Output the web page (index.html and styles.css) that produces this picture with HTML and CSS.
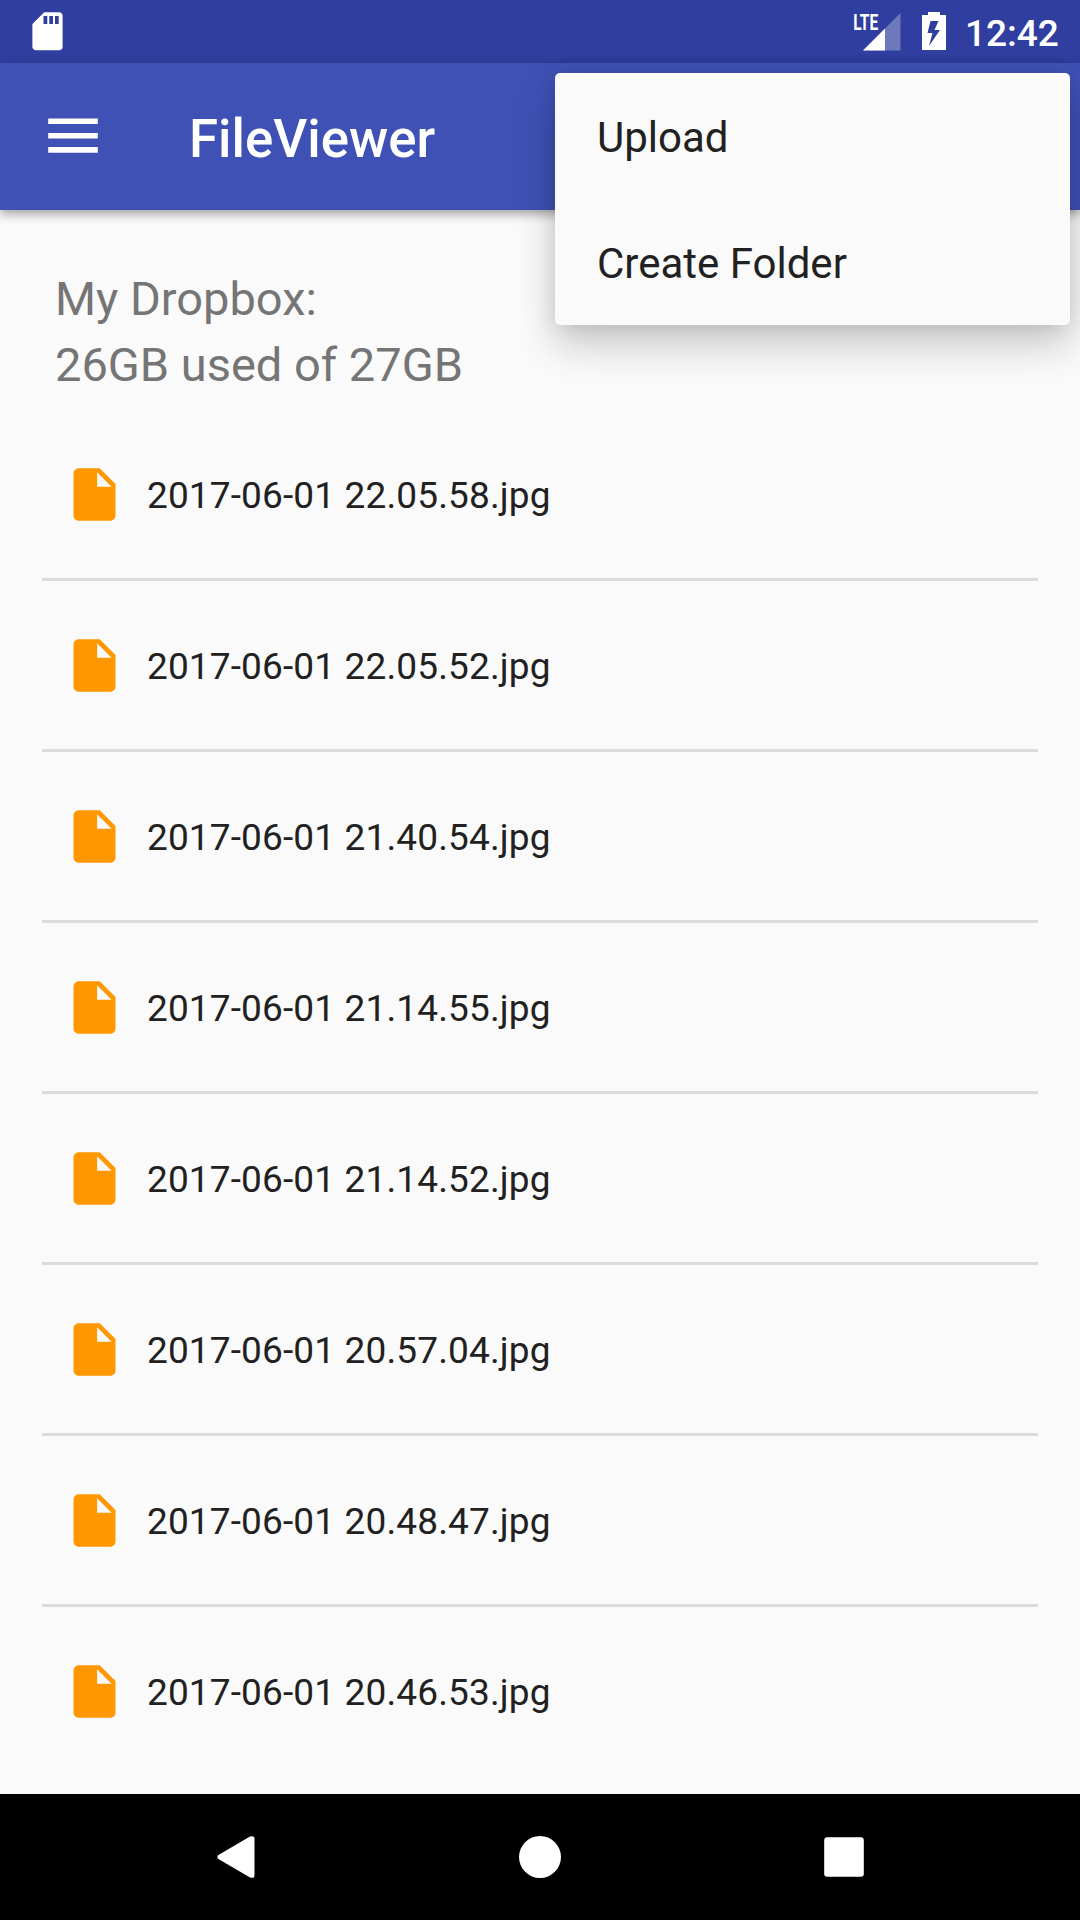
FILE: index.html
```html
<!DOCTYPE html>
<html lang="en">
<head>
<meta charset="utf-8">
<title>FileViewer</title>
<link rel="stylesheet" href="styles.css">
</head>
<body>
<div class="screen">
  <header class="status-bar">
    <svg class="sd-icon" width="31" height="39" viewBox="0 0 31 39"><path fill="#fff" fill-rule="evenodd" d="M12.200 0.300H27A3.500 3.500 0 0 1 30.600 3.900V34.700A3.500 3.500 0 0 1 27 38.300H4A3.500 3.500 0 0 1 .400 34.700V12ZM11.500 4V12H15.300V4ZM17.300 4V12H21V4ZM23 4V12H26.700V4Z"/></svg>
    <div class="status-right">
      <svg class="signal-icon" width="47" height="39" viewBox="0 0 47 39">
        <path fill="#fff" fill-opacity=".3" d="M46.500 1V38.500H9Z"/>
        <path fill="#fff" d="M31 16.500V38.500H9Z"/>
        <text class="network" x="-0.800" y="17.700" textLength="25" lengthAdjust="spacingAndGlyphs">LTE</text>
      </svg>
      <svg class="battery-icon" width="24" height="38" viewBox="0 0 24 38"><path fill="#fff" fill-rule="evenodd" d="M6 0H18V3H24V38H0V3H6ZM8.500 9L5.500 21H10.500L7 34L18 18H12.500L16.500 9Z"/></svg>
      <span class="clock">12:42</span>
    </div>
  </header>
  <div class="app-bar">
    <svg class="menu-icon" width="50" height="36" viewBox="0 0 50 36"><path fill="#fff" d="M.200.400H49.800V6.100H.200ZM.200 14.900H49.800V20.600H.200ZM.200 29.100H49.800V34.800H.200Z"/></svg>
    <h1 class="title">FileViewer</h1>
  </div>
  <main class="content">
    <p class="usage">My Dropbox:<br>26GB used of 27GB</p>
    <ul class="files">
      <li class="file"><svg class="file-icon" viewBox="0 0 24 24"><path d="M6 2c-1.100 0-1.990.900-1.990 2L4 20c0 1.100.890 2 1.990 2H18c1.100 0 2-.900 2-2V8l-6-6H6zm7 7V3.500L18.500 9H13z"/></svg><span>2017-06-01 22.05.58.jpg</span></li>
      <li class="file"><svg class="file-icon" viewBox="0 0 24 24"><path d="M6 2c-1.100 0-1.990.900-1.990 2L4 20c0 1.100.890 2 1.990 2H18c1.100 0 2-.900 2-2V8l-6-6H6zm7 7V3.500L18.500 9H13z"/></svg><span>2017-06-01 22.05.52.jpg</span></li>
      <li class="file"><svg class="file-icon" viewBox="0 0 24 24"><path d="M6 2c-1.100 0-1.990.900-1.990 2L4 20c0 1.100.890 2 1.990 2H18c1.100 0 2-.900 2-2V8l-6-6H6zm7 7V3.500L18.500 9H13z"/></svg><span>2017-06-01 21.40.54.jpg</span></li>
      <li class="file"><svg class="file-icon" viewBox="0 0 24 24"><path d="M6 2c-1.100 0-1.990.900-1.990 2L4 20c0 1.100.890 2 1.990 2H18c1.100 0 2-.900 2-2V8l-6-6H6zm7 7V3.500L18.500 9H13z"/></svg><span>2017-06-01 21.14.55.jpg</span></li>
      <li class="file"><svg class="file-icon" viewBox="0 0 24 24"><path d="M6 2c-1.100 0-1.990.900-1.990 2L4 20c0 1.100.890 2 1.990 2H18c1.100 0 2-.900 2-2V8l-6-6H6zm7 7V3.500L18.500 9H13z"/></svg><span>2017-06-01 21.14.52.jpg</span></li>
      <li class="file"><svg class="file-icon" viewBox="0 0 24 24"><path d="M6 2c-1.100 0-1.990.900-1.990 2L4 20c0 1.100.890 2 1.990 2H18c1.100 0 2-.900 2-2V8l-6-6H6zm7 7V3.500L18.500 9H13z"/></svg><span>2017-06-01 20.57.04.jpg</span></li>
      <li class="file"><svg class="file-icon" viewBox="0 0 24 24"><path d="M6 2c-1.100 0-1.990.900-1.990 2L4 20c0 1.100.890 2 1.990 2H18c1.100 0 2-.900 2-2V8l-6-6H6zm7 7V3.500L18.500 9H13z"/></svg><span>2017-06-01 20.48.47.jpg</span></li>
      <li class="file"><svg class="file-icon" viewBox="0 0 24 24"><path d="M6 2c-1.100 0-1.990.900-1.990 2L4 20c0 1.100.890 2 1.990 2H18c1.100 0 2-.900 2-2V8l-6-6H6zm7 7V3.500L18.500 9H13z"/></svg><span>2017-06-01 20.46.53.jpg</span></li>
    </ul>
  </main>
  <nav class="nav-bar">
    <svg width="60" height="60" viewBox="0 0 60 60"><path fill="#fff" d="M12 28.200L44 9.600Q48.500 8 48.500 12V48Q48.500 52 44 50.400L12 31.800Q10.500 30 12 28.200Z"/></svg>
    <svg width="60" height="60" viewBox="0 0 60 60"><circle cx="30" cy="30" r="21" fill="#fff"/></svg>
    <svg width="60" height="60" viewBox="0 0 60 60"><rect x="10.200" y="10.200" width="39.600" height="39.600" rx="3" fill="#fff"/></svg>
  </nav>
  <div class="popup">
    <div class="popup-item">Upload</div>
    <div class="popup-item">Create Folder</div>
  </div>
</div>
</body>
</html>
```
FILE: styles.css
```css
* { box-sizing: border-box; margin: 0; padding: 0; }
body { width: 1080px; height: 1920px; overflow: hidden; font-family: Roboto, sans-serif; background: #fafafa; color: #212121; }
svg { display: block; flex: none; }
.screen { position: relative; display: flex; flex-direction: column; height: 1920px; }
.status-bar { display: flex; justify-content: space-between; height: 63px; padding: 12px 0 0 32px; background: #303f9f; color: #fff; }
.status-right { display: flex; width: 226px; }
.signal-icon { overflow: visible; }
.network { font-size: 22px; font-weight: 700; fill: #fff; }
.battery-icon { margin: 0 19px 0 21px; }
.clock { font-size: 37px; line-height: 43px; font-weight: 500; }
.app-bar { display: flex; align-items: center; height: 147px; padding-left: 48px; gap: 91px; background: #3f51b5; color: #fff; box-shadow: 0 4px 10px rgba(0, 0, 0, .36); z-index: 1; }
.menu-icon { margin-bottom: 2px; }
.title { font-size: 52.8px; font-weight: 500; line-height: 62px; padding-top: 4px; }
.content { flex: 1; }
.usage { padding: 56px 55px 0; font-size: 47px; line-height: 66px; color: #757575; }
.files { list-style: none; margin: 12px 42px 0; }
.file { display: flex; align-items: center; height: 171px; padding: 0 21px; gap: 21px; font-size: 37px; letter-spacing: .14px; border-bottom: 3px solid #dbdbdb; }
.file span { padding-top: 2px; }
.file:last-child { border-bottom-color: transparent; }
.file-icon { width: 63px; height: 63px; fill: #ff9800; }
.nav-bar { display: flex; align-items: center; justify-content: center; gap: 244px; height: 126px; background: #000; }
.popup { position: absolute; z-index: 2; top: 73px; left: 555px; width: 515px; border-radius: 5px; background: #fafafa; box-shadow: 0 20px 40px rgba(0, 0, 0, .2), 0 2px 20px rgba(0, 0, 0, .1); }
.popup-item { height: 126px; padding-left: 42px; line-height: 130px; font-size: 42px; }
```
